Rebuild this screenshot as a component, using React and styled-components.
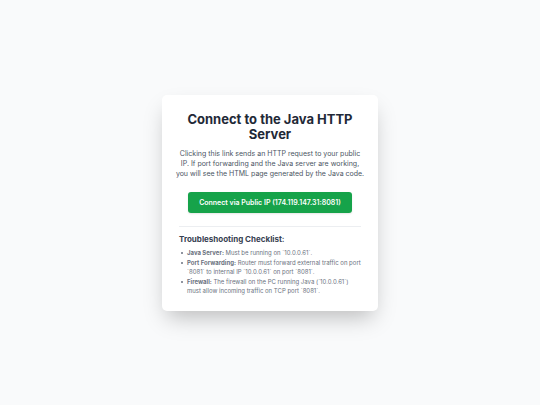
import styled, { createGlobalStyle } from "styled-components";

const PUBLIC_URL = "http://174.119.147.31:8081";

const checks = [
  {
    name: "Java Server:",
    text: "Must be running on `10.0.0.61`.",
  },
  {
    name: "Port Forwarding:",
    text: "Router must forward external traffic on port `8081` to internal IP `10.0.0.61` on port `8081`.",
  },
  {
    name: "Firewall:",
    text: "The firewall on the PC running Java (`10.0.0.61`) must allow incoming traffic on TCP port `8081`.",
  },
];

const App = () => {
  return (
    <>
      <GlobalStyle />
      <Page>
        <Card>
          <Title>Connect to the Java HTTP Server</Title>
          <Intro>
            Clicking this link sends an HTTP request to your public IP. If port
            forwarding and the Java server are working, you will see the HTML
            page generated by the Java code.
          </Intro>
          <ConnectLink href={PUBLIC_URL}>
            Connect via Public IP (174.119.147.31:8081)
          </ConnectLink>
          <Checklist>
            <h2>Troubleshooting Checklist:</h2>
            <ul>
              {checks.map(({ name, text }) => (
                <li key={name}>
                  <p>
                    <strong>{name}</strong> {text}
                  </p>
                </li>
              ))}
            </ul>
          </Checklist>
        </Card>
      </Page>
    </>
  );
};

const GlobalStyle = createGlobalStyle`
  * {
    box-sizing: border-box;
    margin: 0;
    padding: 0;
  }

  body {
    background-color: #f9fafb;
    font-family: Inter, "Liberation Sans", sans-serif;
  }
`;

const Page = styled.main`
  min-height: 100vh;
  display: flex;
  align-items: center;
  justify-content: center;
  padding: 8px;
`;

const Card = styled.section`
  width: 100%;
  max-width: 216px;
  padding: 17px 13px 16px;
  display: flex;
  flex-direction: column;
  align-items: center;
  background-color: #ffffff;
  border-radius: 5px;
  box-shadow: 0 11px 21px -5px rgba(0, 0, 0, 0.25);
  text-align: center;
`;

const Title = styled.h1`
  padding: 0 4px;
  color: #1f2937;
  font-size: 13px;
  font-weight: 700;
  line-height: 15px;
`;

const Intro = styled.p`
  margin: 7px 0 13px;
  color: #4b5563;
  font-size: 7px;
  line-height: 10px;
`;

const ConnectLink = styled.a`
  padding: 6px 11px 5px;
  background-color: #16a34a;
  border-radius: 3px;
  box-shadow: 0 1px 2px rgba(0, 0, 0, 0.1);
  color: #ffffff;
  font-size: 7px;
  font-weight: 600;
  line-height: 10px;
  text-decoration: none;
  white-space: nowrap;

  &:hover {
    background-color: #15803d;
  }
`;

const Checklist = styled.div`
  align-self: stretch;
  margin: 13px 4px 0;
  padding-top: 7px;
  border-top: 1px solid #eceef1;
  text-align: left;

  h2 {
    margin-bottom: 3px;
    color: #374151;
    font-size: 8px;
    font-weight: 700;
    line-height: 11px;
  }

  ul {
    display: flex;
    flex-direction: column;
    gap: 1px;
    padding-left: 2px;
    color: #6b7280;
    font-size: 6px;
    line-height: 9px;
    list-style: none;
  }

  li {
    display: flex;
    gap: 4px;

    &::before {
      content: "";
      flex: none;
      width: 2px;
      height: 2px;
      margin-top: 4px;
      border-radius: 50%;
      background-color: #6b7280;
    }
  }

  strong {
    font-weight: 700;
  }
`;

export default App;
